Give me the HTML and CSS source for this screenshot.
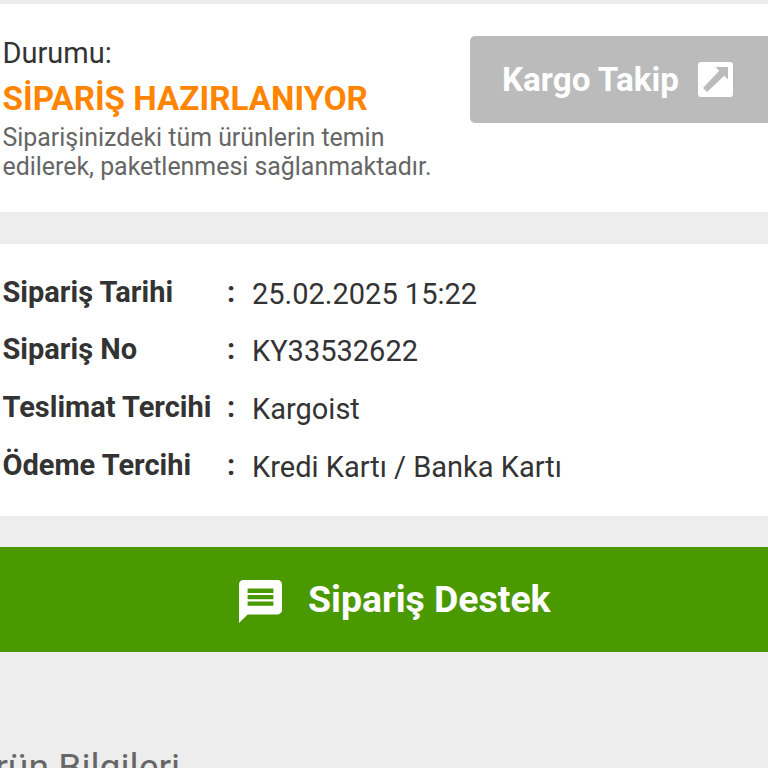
FILE: index.html
```html
<!DOCTYPE html>
<html lang="tr">
<head>
    <meta charset="UTF-8">
    <meta name="viewport" content="width=device-width, initial-scale=1.0">
    <title>Sipariş Detayı</title>
    <link rel="stylesheet" href="styles.css">
</head>
<body>
    <section class="status">
        <div class="status-text">
            <div class="status-label">Durumu:</div>
            <div class="status-value">SİPARİŞ HAZIRLANIYOR</div>
            <p class="status-info">Siparişinizdeki tüm ürünlerin temin edilerek, paketlenmesi sağlanmaktadır.</p>
        </div>
        <button class="track-button">
            <span>Kargo Takip</span>
            <svg class="track-icon" viewBox="0 0 35 35">
                <rect width="35" height="35" rx="3" fill="#fff"/>
                <path d="M17.500 5H30V17.500L26.300 13.800L9 30L5 26L21.200 8.700Z" fill="#bbb"/>
            </svg>
        </button>
    </section>

    <section class="details">
        <div class="row"><b>Sipariş Tarihi</b><b>:</b><span>25.02.2025 15:22</span></div>
        <div class="row"><b>Sipariş No</b><b>:</b><span>KY33532622</span></div>
        <div class="row"><b>Teslimat Tercihi</b><b>:</b><span>Kargoist</span></div>
        <div class="row"><b>Ödeme Tercihi</b><b>:</b><span>Kredi Kartı / Banka Kartı</span></div>
    </section>

    <button class="support-button">
        <svg class="support-icon" viewBox="2 2 20 20">
            <path fill="#fff" fill-rule="evenodd" d="M20 2H4c-1.100 0-2 .9-2 2v18l4-4h14c1.100 0 2-.9 2-2V4c0-1.100-.9-2-2-2zM6 6h12v2H6zM6 9h12v2H6zM6 12h12v2H6z"/>
        </svg>
        <span>Sipariş Destek</span>
    </button>

    <h2 class="products-title">Ürün Bilgileri</h2>
</body>
</html>
```
FILE: styles.css
```css
* {
    box-sizing: border-box;
}
body {
    margin: 0;
    height: 768px;
    overflow: hidden;
    padding-top: 4px;
    font-family: Roboto, sans-serif;
    background-color: #ededed;
    color: #333;
}
button {
    border: 0;
    font-family: inherit;
    font-weight: bold;
    color: #fff;
    display: flex;
    align-items: center;
}
.status {
    display: flex;
    justify-content: space-between;
    height: 208px;
    background-color: #fff;
}
.status-text {
    width: 460px;
    padding: 31px 0 0 2.5px;
}
.status-label {
    font-size: 29px;
    line-height: 36px;
}
.status-value {
    padding-top: 4px;
    font-size: 33.2px;
    line-height: 48px;
    font-weight: bold;
    color: #ff8400;
    white-space: nowrap;
}
.status-info {
    margin: 0;
    font-size: 24.9px;
    line-height: 29px;
    color: #666;
}
.track-button {
    width: 298px;
    height: 87px;
    margin-top: 32px;
    padding: 0 0 0 32px;
    gap: 19px;
    font-size: 33.2px;
    background-color: #bbb;
    border-radius: 5px 0 0 5px;
}
.track-icon {
    width: 35px;
    height: 35px;
}
.details {
    height: 272px;
    margin: 32px 0 31px;
    padding: 19.5px 0 0 2.5px;
    background-color: #fff;
}
.row {
    display: grid;
    grid-template-columns: 224.5px 25px 1fr;
    height: 57.8px;
    font-size: 29px;
    line-height: 57px;
}
.row span {
    padding-top: 2px;
}
.support-button {
    width: 100%;
    height: 105px;
    padding: 0 0 2px 239px;
    gap: 26px;
    font-size: 37.4px;
    background-color: #4b9900;
}
.support-icon {
    width: 43px;
    height: 43px;
    margin-top: 6px;
}
.products-title {
    margin: 93px 0 0 -29px;
    font-size: 37.3px;
    line-height: 44px;
    font-weight: normal;
    color: #666;
}
```
